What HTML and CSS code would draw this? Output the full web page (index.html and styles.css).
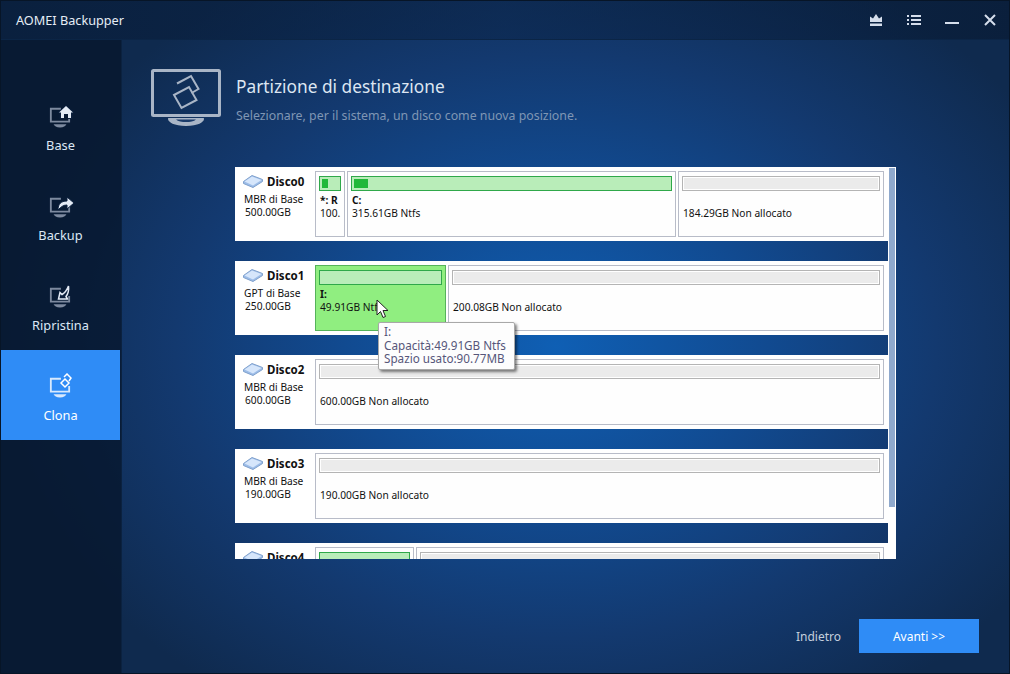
FILE: index.html
```html
<!DOCTYPE html>
<html lang="it">
<head>
<meta charset="utf-8">
<title>AOMEI Backupper</title>
<link rel="stylesheet" href="styles.css">
</head>
<body>
<svg class="defs" width="0" height="0" aria-hidden="true">
  <defs>
    <symbol id="disk" viewBox="0 0 20 13">
      <path d="M.5 6.500 L9 .5 L19.500 4.500 L19.500 6.500 L10 12.500 L.5 8.500 Z" fill="#9dbde8" stroke="#7fa0cc" stroke-width="1"/>
      <path d="M1.500 6.500 L9 1.500 L18.500 5 L10 10.500 Z" fill="#d6e6fb"/>
    </symbol>
    <symbol id="monitor" viewBox="0 0 24 24">
      <path d="M13 3H2v14h20v-6" fill="none" stroke="currentColor" stroke-width="2"/>
      <path d="M5 20h14c-1 2-3 3.500-7 3.500S6 22 5 20z" fill="currentColor"/>
    </symbol>
  </defs>
</svg>
<div class="window">
  <header class="titlebar">
    <span class="app-name">AOMEI Backupper</span>
    <div class="controls">
      <svg class="ctl" width="14" height="14" viewBox="0 0 14 14"><path d="M1 9V3.500l3 2L7 1l3 4.500 3-2V9z" fill="#d5deec"/><rect x="1" y="10.500" width="12" height="2.500" fill="#d5deec"/></svg>
      <svg class="ctl" width="14" height="12" viewBox="0 0 14 12"><path d="M0 1h2v2H0zM0 5h2v2H0zM0 9h2v2H0zM4 1h10v2H4zM4 5h10v2H4zM4 9h10v2H4z" fill="#d5deec"/></svg>
      <svg class="ctl" width="14" height="14" viewBox="0 0 14 14"><rect x="0" y="9" width="14" height="2" fill="#d5deec"/></svg>
      <svg class="ctl" width="14" height="14" viewBox="0 0 14 14"><path d="M2 2l10 10M12 2L2 12" stroke="#d5deec" stroke-width="2" fill="none"/></svg>
    </div>
  </header>
  <div class="body">
    <nav class="sidebar">
      <a class="nav-item">
        <span class="nav-icon">
          <svg width="26" height="26" viewBox="0 0 26 26"><use href="#monitor" x="0" y="3" width="22" height="22" color="#7d8a9f"/><path d="M8 10l9-8 9 8h-2.500v6H19v-4h-4v4h-4.500v-6z" fill="#0b1f3c"/><path d="M10 9.500L17 3l7 6.500h-2V15h-3v-4h-4v4h-3V9.500z" fill="#e4ebf5"/></svg>
        </span>
        <span class="nav-label">Base</span>
      </a>
      <a class="nav-item">
        <span class="nav-icon">
          <svg width="26" height="26" viewBox="0 0 26 26"><use href="#monitor" x="0" y="3" width="22" height="22" color="#7d8a9f"/><path d="M9 17c0-6 3-9 9-9V4l7 6-7 6v-4c-4 0-6 2-9 5z" fill="#e4ebf5" stroke="#0b1f3c" stroke-width="1"/></svg>
        </span>
        <span class="nav-label">Backup</span>
      </a>
      <a class="nav-item">
        <span class="nav-icon">
          <svg width="26" height="26" viewBox="0 0 26 26"><use href="#monitor" x="0" y="3" width="22" height="22" color="#7d8a9f"/><path d="M20 1c1 5 0 10-2 13l2 3H8l2-9 2.500 2.500C15 9 18 6 20 1z" fill="#0b1f3c"/><path d="M19.500 3c.5 4-.5 8-2.500 10.500L18.500 16H9.500l1.500-6.500 2 2C15.500 10 18 7 19.500 3z" fill="none" stroke="#e4ebf5" stroke-width="1.500"/></svg>
        </span>
        <span class="nav-label">Ripristina</span>
      </a>
      <a class="nav-item active">
        <span class="nav-icon">
          <svg width="26" height="26" viewBox="0 0 26 26"><use href="#monitor" x="0" y="3" width="22" height="22" color="#d8e9fd"/><path d="M17 0l6 6-7 10-6-6z" fill="#2f8cf6"/><path d="M15 4l3-3 4 4-2 3M12 10l4-4 4 4-4 4z" fill="none" stroke="#fff" stroke-width="1.500"/></svg>
        </span>
        <span class="nav-label">Clona</span>
      </a>
    </nav>
    <main class="main">
      <section class="page-head">
        <svg class="page-icon" width="70" height="58" viewBox="0 0 70 58">
          <rect x="1.500" y="1.500" width="67" height="45" rx="1" fill="none" stroke="#a9b5c6" stroke-width="3"/>
          <path d="M18 49h34c1 0 1 .5 1 1 0 3-6 7-18 7s-18-4-18-7c0-.5 0-1 1-1z" fill="#a9b5c6"/>
          <path d="M25 50.500h20c-2 2-6 2.500-10 2.500s-8-.5-10-2.500z" fill="#1a3b6a"/>
          <path d="M26 14.500l14-7.500 7.500 13-7 4" fill="none" stroke="#a9b5c6" stroke-width="2"/>
          <path d="M23 26l15-8 7.500 13-15 8z" fill="none" stroke="#a9b5c6" stroke-width="2"/>
        </svg>
        <div class="page-text">
          <h1 class="page-title">Partizione di destinazione</h1>
          <p class="page-sub">Selezionare, per il sistema, un disco come nuova posizione.</p>
        </div>
      </section>

      <section class="list">
        <div class="rows">
          <div class="row">
            <div class="info">
              <div class="disk-name"><svg class="disk-icon" width="20" height="13"><use href="#disk"/></svg>Disco0</div>
              <div class="disk-type">MBR di Base</div>
              <div class="disk-size">500.00GB</div>
            </div>
            <div class="parts">
              <div class="part" style="width:30px"><div class="bar used"><i style="width:6px"></i></div><b>*: R</b><span>100.</span></div>
              <div class="part" style="width:329px"><div class="bar used"><i style="width:14px"></i></div><b>C:</b><span>315.61GB Ntfs</span></div>
              <div class="part" style="width:206px"><div class="bar"></div><b>&nbsp;</b><span>184.29GB Non allocato</span></div>
            </div>
          </div>
          <div class="row">
            <div class="info">
              <div class="disk-name"><svg class="disk-icon" width="20" height="13"><use href="#disk"/></svg>Disco1</div>
              <div class="disk-type">GPT di Base</div>
              <div class="disk-size">250.00GB</div>
            </div>
            <div class="parts">
              <div class="part selected" style="width:131px"><div class="bar used"></div><b>I:</b><span>49.91GB Ntfs</span></div>
              <div class="part" style="width:436px"><div class="bar"></div><b>&nbsp;</b><span>200.08GB Non allocato</span></div>
            </div>
          </div>
          <div class="row">
            <div class="info">
              <div class="disk-name"><svg class="disk-icon" width="20" height="13"><use href="#disk"/></svg>Disco2</div>
              <div class="disk-type">MBR di Base</div>
              <div class="disk-size">600.00GB</div>
            </div>
            <div class="parts">
              <div class="part" style="width:569px"><div class="bar"></div><b>&nbsp;</b><span>600.00GB Non allocato</span></div>
            </div>
          </div>
          <div class="row">
            <div class="info">
              <div class="disk-name"><svg class="disk-icon" width="20" height="13"><use href="#disk"/></svg>Disco3</div>
              <div class="disk-type">MBR di Base</div>
              <div class="disk-size">190.00GB</div>
            </div>
            <div class="parts">
              <div class="part" style="width:569px"><div class="bar"></div><b>&nbsp;</b><span>190.00GB Non allocato</span></div>
            </div>
          </div>
          <div class="row">
            <div class="info">
              <div class="disk-name"><svg class="disk-icon" width="20" height="13"><use href="#disk"/></svg>Disco4</div>
            </div>
            <div class="parts">
              <div class="part" style="width:99px"><div class="bar used"></div></div>
              <div class="part" style="width:468px"><div class="bar"></div></div>
            </div>
          </div>
        </div>
        <div class="scroll"><div class="thumb"></div></div>
      </section>

      <footer class="foot">
        <span class="back">Indietro</span>
        <span class="next">Avanti &gt;&gt;</span>
      </footer>
    </main>
  </div>

  <div class="tooltip">I:<br>Capacità:49.91GB Ntfs<br>Spazio usato:90.77MB</div>
  <svg class="cursor" width="14" height="21" viewBox="0 0 14 21"><path d="M1 1v15l3.500-3.500 2.500 6 2.500-1-2.500-6H12z" fill="#fff" stroke="#222" stroke-width="1"/></svg>
</div>
</body>
</html>
```
FILE: styles.css
```css
* { box-sizing: border-box; }
html, body { margin: 0; padding: 0; }
body { width: 1010px; height: 674px; overflow: hidden; font-family: "Noto Sans", "Open Sans", sans-serif; }
.defs { position: absolute; }

.window {
  position: relative;
  width: 1010px;
  height: 674px;
  display: flex;
  flex-direction: column;
  border: 1px solid #071527;
  color: #fff;
  background:
    radial-gradient(ellipse 560px 430px at 555px 345px, #0f5fb4 0%, #114a90 38%, #13396f 68%, #0f2a4e 100%),
    #0f2a4e;
}

.titlebar {
  height: 39px;
  flex: none;
  display: flex;
  align-items: center;
  justify-content: space-between;
  padding: 0 12px 0 15px;
  background: linear-gradient(90deg, rgba(8,28,56,.72), rgba(10,36,72,.55) 50%, rgba(7,24,48,.6));
  border-bottom: 1px solid #0b2546;
}
.app-name { font-size: 12.700px; color: #e6edf6; }
.controls { display: flex; align-items: center; gap: 24px; }
.ctl { display: block; }

.body { flex: 1; display: flex; min-height: 0; }

.sidebar {
  width: 120px;
  flex: none;
  padding-top: 40px;
  background: rgba(7, 22, 44, .78);
  border-right: 1px solid #0b2240;
  box-sizing: content-box;
}
.nav-item { height: 90px; width: 119px; display: flex; flex-direction: column; align-items: center; padding-top: 23px; color: #dbe7f5; }
.nav-item.active { background: #2f8cf6; color: #fff; }
.nav-icon { height: 26px; display: block; margin-left: 3px; }
.nav-icon svg { display: block; }
.nav-label { font-size: 12.800px; line-height: 18px; margin-top: 7px; }

.main { flex: 1; display: flex; flex-direction: column; padding-left: 113px; min-width: 0; }

.page-head { display: flex; gap: 15px; height: 127px; padding: 29px 0 0 29px; margin-left: -113px; }
.page-text { padding-top: 5px; }
.page-title { margin: 0; font-size: 17.300px; font-weight: 400; line-height: 26px; color: #dde6f2; }
.page-sub { margin: 8px 0 0; font-size: 12.350px; line-height: 16px; color: #7f96b4; }
.page-icon { display: block; flex: none; }

.list { width: 661px; height: 392px; display: flex; overflow: hidden; }
.rows { width: 653px; display: flex; flex-direction: column; gap: 20px; flex: none; }
.row { height: 74px; flex: none; display: flex; background: #fff; padding: 4px; color: #111; font-size: 10.200px; }

.info { width: 76px; flex: none; padding: 2px 0 0 5px; line-height: 13px; }
.disk-name { display: flex; align-items: center; gap: 4px; height: 16px; margin-left: -1px; font-size: 11.500px; font-weight: 700; }
.disk-icon { flex: none; }
.disk-type { margin-top: 4px; }
.disk-size { margin-left: 1px; }

.parts { display: flex; gap: 2px; min-width: 0; }
.part { height: 66px; flex: none; overflow: hidden; border: 1px solid #b8bcc8; padding: 4px 3px 0 3px; display: flex; flex-direction: column; line-height: 13px; white-space: nowrap; background: #fefefe; }
.part b { margin-top: 3px; padding-left: 1px; }
.part span { padding-left: 1px; }
.part.selected { background: #90ee80; border-color: #55b35a; }
.bar { height: 15px; flex: none; border: 1px solid #b4b4b4; background: #ebebeb; box-shadow: inset 0 0 0 1px #fff; }
.bar.used { border-color: #2fa84a; background: #b9edb9; padding: 2px; box-shadow: none; }
.bar.used i { display: block; height: 100%; background: #22b83a; }

.scroll { width: 8px; flex: none; background: #fff; padding: 1px 1px 0 1px; }
.thumb { height: 339px; background: #8fa9cd; }

.foot { flex: 1; display: flex; justify-content: flex-end; align-items: flex-end; gap: 18px; padding: 0 30px 20px 0; }
.back { height: 34px; font-size: 12px; line-height: 36px; color: #c4cfdd; }
.next { width: 120px; height: 34px; line-height: 36px; text-align: center; background: #2f8cf6; font-size: 12px; color: #fff; }

.tooltip {
  position: absolute;
  left: 377px;
  top: 321px;
  width: 137px;
  height: 48px;
  padding: 2px 5px;
  background: #fdfdfd;
  border: 1px solid #a8a8a8;
  border-radius: 2px;
  box-shadow: 2px 2px 3px rgba(0,0,0,.5);
  font-size: 11.700px;
  line-height: 13.500px;
  color: #56567a;
  white-space: nowrap;
}
.cursor { position: absolute; left: 375px; top: 298px; }
```
